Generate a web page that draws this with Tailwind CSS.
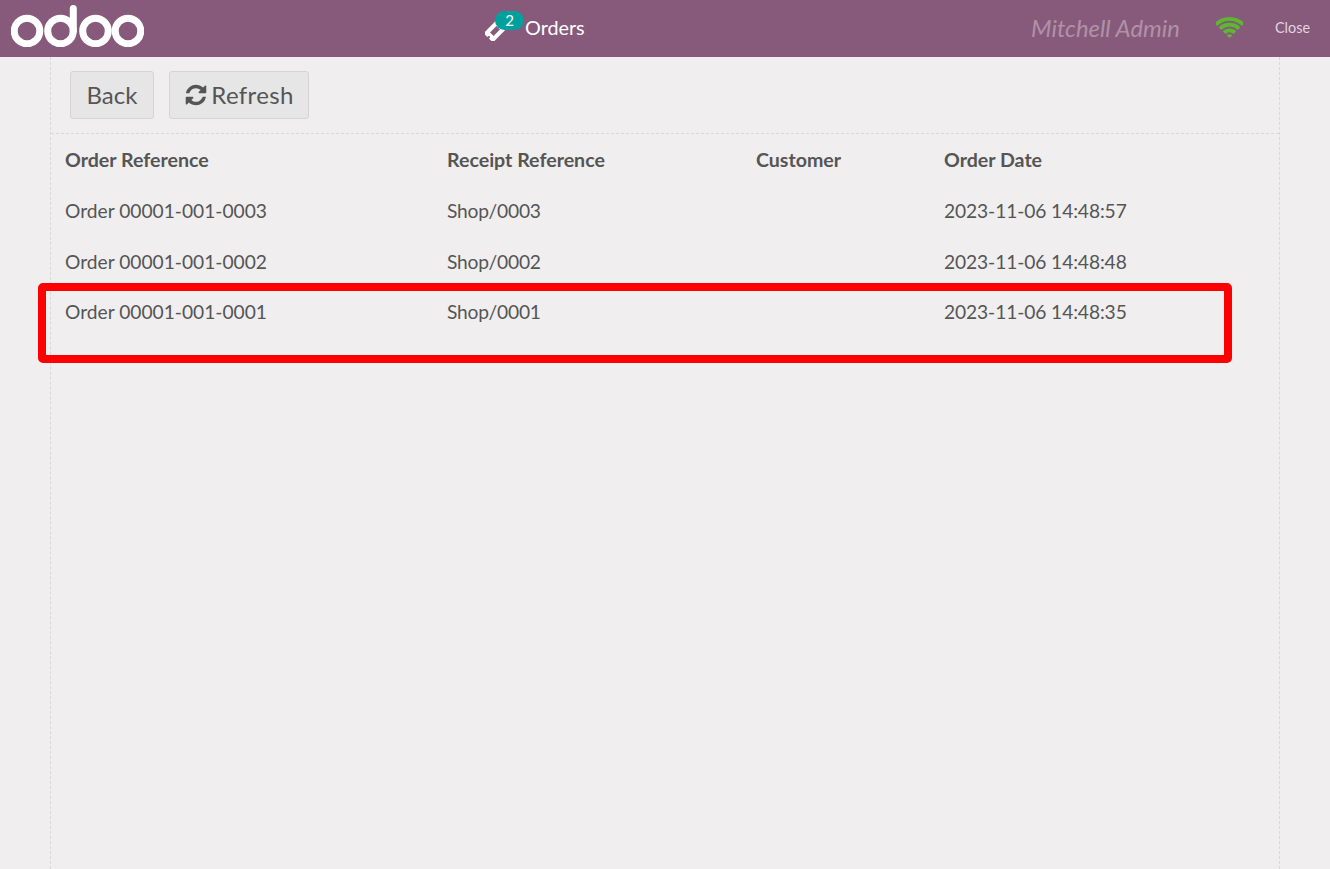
<!DOCTYPE html>
<html lang="en">
<head>
  <meta charset="UTF-8">
  <title>Orders | Odoo POS</title>
  <script src="https://cdn.jsdelivr.net/npm/@tailwindcss/browser@4"></script>
</head>
<body class="bg-[#f0eeee] h-[869px] overflow-hidden font-['Lato','Open_Sans',sans-serif] text-[#555555]">
  <!-- top bar -->
  <header class="bg-[#875a7b] h-[57px] flex items-center relative">
    <svg class="absolute left-[11px] top-[5px]" width="133" height="42" viewBox="0 0 133 42" fill="none" stroke="#fff" stroke-width="7">
      <circle cx="16" cy="26" r="12.8"/>
      <circle cx="49.5" cy="26" r="12.8"/>
      <path d="M62.3 26V3.5" stroke-linecap="round"/>
      <circle cx="84.5" cy="26" r="12.8"/>
      <circle cx="117" cy="26" r="12.8"/>
    </svg>
    <div class="absolute left-[485px] top-0 h-[56px] flex items-center text-white text-[19.8px]">
      <svg class="mt-[6px]" width="20" height="20" viewBox="0 0 1792 1792" fill="#fff" stroke="#fff" stroke-width="190"><path d="M813 1431l618-618q19-19 19-45t-19-45l-362-362q-18-18-45-18t-45 18l-618 618q-19 19-19 45t19 45l362 362q18 18 45 18t45-18zm889-637l-907 908q-37 37-90.5 37t-90.5-37l-126-126q56-56 56-136t-56-136-136-56-136 56l-125-126q-37-37-37-90.5t37-90.5l907-906q37-37 90.5-37t90.5 37l125 125q-56 56-56 136t56 136 136 56 136-56l126 125q37 37 37 90.5t-37 90.5z"/></svg>
      <span class="ml-[20px]">Orders</span>
      <span class="absolute left-[10px] top-[11px] w-[29px] h-[19px] rounded-full bg-[#00a09d] text-[15px] leading-[19px] text-center">2</span>
    </div>
    <span class="absolute left-[1031px] top-[13px] italic text-[23.85px] leading-[29px] text-white/35">Mitchell Admin</span>
    <svg class="absolute left-[1216px] top-[15px]" width="27" height="27" viewBox="0 0 1792 1792" fill="#5cb82f"><path d="M896 1523q-20 0-93-73.5t-73-93.5q0-32 62.5-54t103.5-22 103.5 22 62.5 54q0 20-73 93.5t-93 73.5zm270-271q-2 0-40-25t-101.5-50-128.5-25-128.5 25-101 50-40.5 25q-18 0-93.5-75t-75.5-93q0-13 10-23 78-77 196-121t233-44 233 44 196 121q10 10 10 23 0 18-75.5 93t-93.5 75zm273-272q-11 0-23-8-136-105-252-154.5t-268-49.5q-85 0-170.5 22t-149 53-113.5 62-79 53-31 22q-17 0-92-75t-75-93q0-12 10-22 132-132 320-205t380-73 380 73 320 205q10 10 10 22 0 18-75 93t-92 75zm271-271q-11 0-22-9-179-157-371.5-236.5t-420.5-79.5-420.5 79.5-371.5 236.5q-11 9-22 9-17 0-92.5-75t-75.5-93q0-13 10-23 187-186 445-288t527-102 527 102 445 288q10 10 10 23 0 18-75.5 93t-92.5 75z"/></svg>
    <span class="absolute left-[1275px] top-[19px] text-[14.4px] leading-[18px] text-white/75">Close</span>
  </header>

  <main class="ml-[50px] w-[1230px] h-[812px] border-x border-dashed border-[#d9d9d9]">
    <div class="h-[77px] pt-[14px] pl-[19px] flex gap-[15px] items-start border-b border-dashed border-[#d9d9d9]">
      <button class="w-[84px] h-[48px] rounded-[3px] border border-[#d5d5d5] bg-[#e6e6e6] text-[24px] text-[#555555]">Back</button>
      <button class="w-[140px] h-[48px] rounded-[3px] border border-[#d5d5d5] bg-[#e6e6e6] text-[24px] text-[#555555] flex items-center justify-center gap-[3px]">
        <svg width="24" height="24" viewBox="0 0 1792 1792" fill="#555555"><path d="M1639 1056q0 5-1 7-64 268-268 434.5t-478 166.5q-146 0-282.5-55t-243.5-157l-129 129q-19 19-45 19t-45-19-19-45v-448q0-26 19-45t45-19h448q26 0 45 19t19 45-19 45l-137 137q71 66 161 102t187 36q134 0 250-65t186-179q11-17 53-117 8-23 30-23h192q13 0 22.5 9.5t9.5 22.5zm25-800v448q0 26-19 45t-45 19h-448q-26 0-45-19t-19-45 19-45l138-138q-148-137-349-137-134 0-250 65t-186 179q-11 17-53 117-8 23-30 23h-199q-13 0-22.5-9.5t-9.5-22.5v-7q65-268 270-434.5t480-166.5q146 0 284 55.5t245 156.5l130-129q19-19 45-19t45 19 19 45z"/></svg>
        <span class="tracking-[0.35px]">Refresh</span>
      </button>
    </div>

    <div class="grid grid-cols-[382px_309px_188px_1fr] pl-[14px] text-[19.2px] leading-[24px] auto-rows-[50.7px] pt-[14.4px] items-start">
      <div class="font-bold text-[19.6px]">Order Reference</div>
      <div class="font-bold text-[19.6px]">Receipt Reference</div>
      <div class="font-bold text-[19.6px]">Customer</div>
      <div class="font-bold text-[19.6px]">Order Date</div>

      <div>Order 00001-001-0003</div>
      <div class="tracking-[-0.2px]">Shop/0003</div>
      <div></div>
      <div class="tracking-[-0.1px]">2023-11-06 14:48:57</div>

      <div>Order 00001-001-0002</div>
      <div class="tracking-[-0.2px]">Shop/0002</div>
      <div></div>
      <div class="tracking-[-0.1px]">2023-11-06 14:48:48</div>

      <div>Order 00001-001-0001</div>
      <div class="tracking-[-0.2px]">Shop/0001</div>
      <div></div>
      <div class="tracking-[-0.1px]">2023-11-06 14:48:35</div>
    </div>
  </main>

  <!-- annotation drawn over the screenshot -->
  <div class="absolute left-[38px] top-[283px] w-[1194px] h-[80px] border-[8px] border-[#ff0000] rounded-[5px]"></div>
</body>
</html>
